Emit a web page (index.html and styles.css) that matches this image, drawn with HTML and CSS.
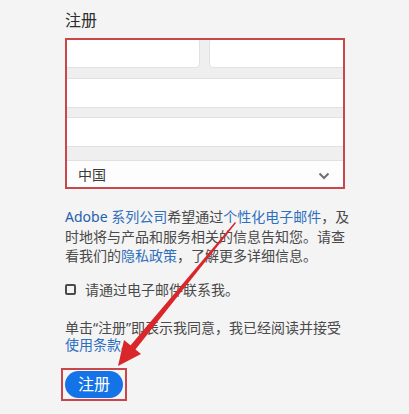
FILE: index.html
```html
<!DOCTYPE html>
<html lang="zh-CN">
<head>
    <meta charset="UTF-8">
    <title>注册</title>
    <link rel="stylesheet" href="styles.css">
</head>
<body>
    <div class="page">
        <h2 class="title">注册</h2>

        <!-- form fields, highlighted by the red annotation box -->
        <div class="fields">
            <div class="fields-inner">
                <div class="row">
                    <div class="input input-first"></div>
                    <div class="input input-last"></div>
                </div>
                <div class="input input-wide"></div>
                <div class="input input-wide"></div>
                <div class="select">
                    <span>中国</span>
                    <svg class="chevron" width="12" height="8" viewBox="0 0 12 8">
                        <path d="M1.5 1.5L6 6l4.5-4.5" fill="none" stroke="#6f6f6f" stroke-width="2"/>
                    </svg>
                </div>
            </div>
        </div>

        <p class="text">
            <a href="#" class="brand">Adobe</a> <a href="#">系列公司</a>希望通过<a href="#">个性化电子邮件</a>，及<br>时地将与产品和服务相关的信息告知您。请查<br>看我们的<a href="#">隐私政策</a>，了解更多详细信息。
        </p>

        <label class="check">
            <span class="box"></span>
            <span>请通过电子邮件联系我。</span>
        </label>

        <p class="terms">
            单击“注册”即表示我同意，我已经阅读并接受<br><a href="#">使用条款</a>。
        </p>

        <div class="btn-frame">
            <button class="btn" type="button">注册</button>
        </div>
    </div>

    <!-- red annotation arrow -->
    <svg class="arrow" width="409" height="414" viewBox="0 0 409 414">
        <path d="M235 222 L236 223 L135 350 L130 346 Z" fill="#d9262a"/>
        <path d="M118 366 L124 340 L141 354 Z" fill="#d9262a"/>
    </svg>
</body>
</html>
```

FILE: styles.css
```css
:root {
    --text-color: #4a4a4a;
    --link-color: #2f6fbf;
    --mark-color: #c9474b;
    --blue: #1473e6;
}

* {
    box-sizing: border-box;
}

body {
    margin: 0;
    width: 409px;
    height: 414px;
    overflow: hidden;
    background: #f4f4f4;
    font-family: "Noto Sans", "Noto Sans CJK SC", sans-serif;
    color: var(--text-color);
    position: relative;
}

.page {
    padding: 9px 0 0 64px;
    width: 345px;
}

.title {
    margin: 0;
    font-size: 16px;
    font-weight: 400;
    line-height: 22px;
    color: #2c2c2c;
    padding-left: 1px;
}

.fields {
    margin: 7px 0 0 1px;
    border: 2px solid var(--mark-color);
    width: 280px;
    height: 151px;
    overflow: hidden;
    background: #efefef;
}

.fields-inner {
    display: flex;
    flex-direction: column;
    margin: 0 -3px;
}

.row {
    display: flex;
    gap: 9px;
    margin-top: -2px;
}

.input {
    background: #fff;
    border: 1px solid #e1e1e1;
    border-radius: 4px;
}

.input-first {
    width: 136px;
    height: 30px;
}

.input-last {
    flex: 1;
    height: 30px;
}

.input-wide {
    height: 30px;
    margin-top: 10px;
}

.input-wide + .input-wide {
    margin-top: 9px;
}

.select {
    margin-top: 13px;
    height: 28px;
    background: #fdfdfd;
    border: 1px solid #e1e1e1;
    display: flex;
    align-items: center;
    justify-content: space-between;
    padding: 0 15px 0 13px;
    font-size: 14px;
    color: #3a3a3a;
}

.chevron {
    margin-top: 3px;
}

.text {
    margin: 18px 0 0 1px;
    width: 300px;
    font-size: 14px;
    line-height: 19.5px;
}

a {
    color: var(--link-color);
    text-decoration: none;
}

.brand {
    color: #1f5fae;
}

.check {
    display: flex;
    align-items: center;
    gap: 9px;
    margin: 14px 0 0 1px;
    font-size: 14px;
    line-height: 20px;
}

.box {
    width: 11px;
    height: 11px;
    border: 2px solid #4a4a4a;
    border-radius: 2px;
}

.terms {
    margin: 19px 0 0 1px;
    font-size: 14px;
    line-height: 17px;
}

.btn-frame {
    display: inline-block;
    margin: 15px 0 0 -3px;
    padding: 1px 2px;
    border: 2px solid var(--mark-color);
}

.btn {
    display: block;
    width: 58px;
    height: 27px;
    border: none;
    border-radius: 14px;
    background: var(--blue);
    color: #fff;
    font-family: inherit;
    font-size: 16px;
    line-height: 27px;
    padding: 0;
}

.arrow {
    position: absolute;
    left: 0;
    top: 0;
    pointer-events: none;
}
```
